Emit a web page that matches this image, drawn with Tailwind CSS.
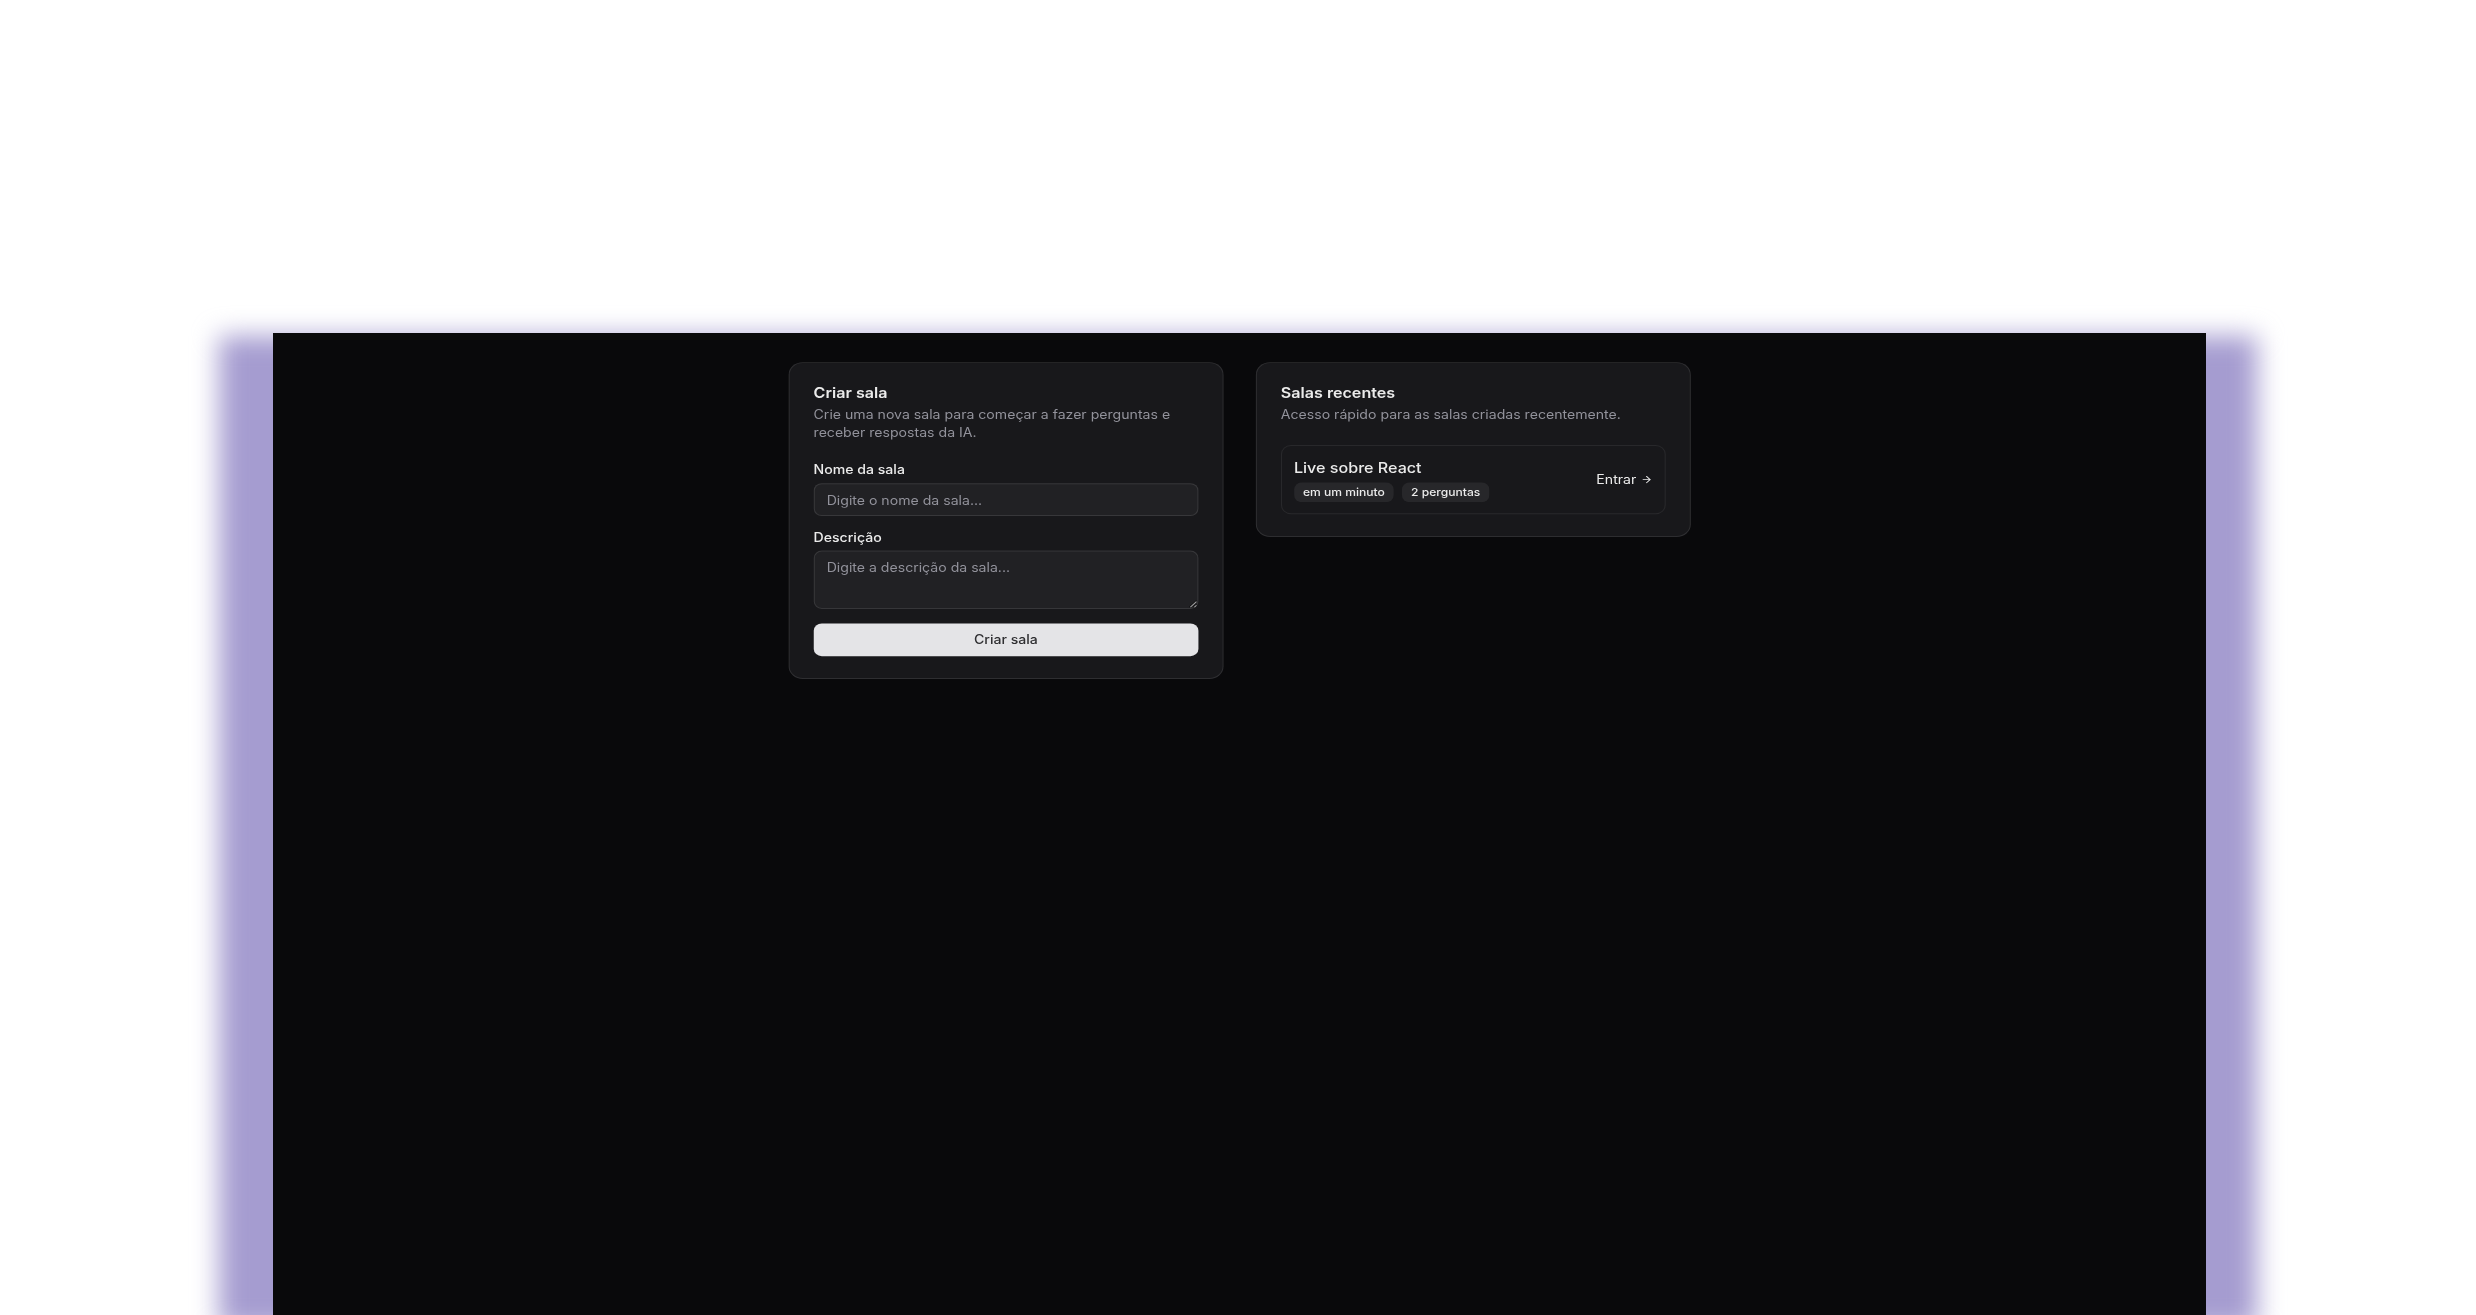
<!DOCTYPE html>
<html lang="pt-BR">
<head>
<meta charset="utf-8">
<title>Salas</title>
<script src="https://cdn.jsdelivr.net/npm/@tailwindcss/browser@4"></script>
</head>
<body class="h-[1315px] overflow-hidden bg-white pt-[333px] font-['Inter',sans-serif] antialiased">
<div class="relative ml-[273px] h-[982px] w-[1933px]">
  <div class="absolute top-[3px] -left-[54px] h-[993px] w-[2038px] bg-[#a59cd0] blur-[13px]"></div>
  <div class="relative h-full w-full overflow-hidden bg-[#09090b]">
    <main class="grid w-[1919.6px] origin-top-left scale-x-[1.007] scale-y-[0.9105] grid-cols-[432px_432px] items-start justify-center gap-8 py-8 text-[#ebebeb]">
      <section class="flex flex-col gap-6 rounded-[14px] border border-white/10 bg-[#18181b] p-6">
        <header class="flex flex-col gap-1.5">
          <h2 class="text-base leading-none font-semibold">Criar sala</h2>
          <p class="text-sm text-[#92929b]">Crie uma nova sala para começar a fazer perguntas e receber respostas da IA.</p>
        </header>
        <form class="flex flex-col gap-4">
          <div class="grid gap-2">
            <label class="text-sm leading-none font-medium">Nome da sala</label>
            <input class="h-9 w-full rounded-lg border border-white/10 bg-white/[0.045] px-3 py-1 text-sm placeholder:text-[#92929b]" placeholder="Digite o nome da sala...">
          </div>
          <div class="grid gap-2">
            <label class="text-sm leading-none font-medium">Descrição</label>
            <textarea class="h-16 w-full rounded-lg border border-white/10 bg-white/[0.045] px-3 py-2 text-sm placeholder:text-[#92929b]" placeholder="Digite a descrição da sala..."></textarea>
          </div>
          <button type="button" class="h-9 rounded-lg bg-[#e4e4e7] text-sm font-medium text-[#2f2f32]">Criar sala</button>
        </form>
      </section>
      <section class="flex flex-col gap-6 rounded-[14px] border border-white/10 bg-[#18181b] p-6">
        <header class="flex flex-col gap-1.5">
          <h2 class="text-base leading-none font-semibold">Salas recentes</h2>
          <p class="text-sm text-[#92929b]">Acesso rápido para as salas criadas recentemente.</p>
        </header>
        <a class="flex items-center justify-between rounded-[10px] border border-white/[0.07] p-3">
          <div class="flex flex-col gap-1">
            <h3 class="text-base font-medium">Live sobre React</h3>
            <div class="flex gap-2">
              <span class="rounded-lg border border-transparent bg-[#27272a] px-2 py-0.5 text-xs font-medium">em um minuto</span>
              <span class="rounded-lg border border-transparent bg-[#27272a] px-2 py-0.5 text-xs font-medium">2 perguntas</span>
            </div>
          </div>
          <span class="flex items-center gap-1 text-sm">Entrar
            <svg class="size-3" viewBox="0 0 24 24" fill="none" stroke="currentColor" stroke-width="2" stroke-linecap="round" stroke-linejoin="round"><path d="M5 12h14"/><path d="m12 5 7 7-7 7"/></svg>
          </span>
        </a>
      </section>
    </main>
  </div>
</div>
</body>
</html>
